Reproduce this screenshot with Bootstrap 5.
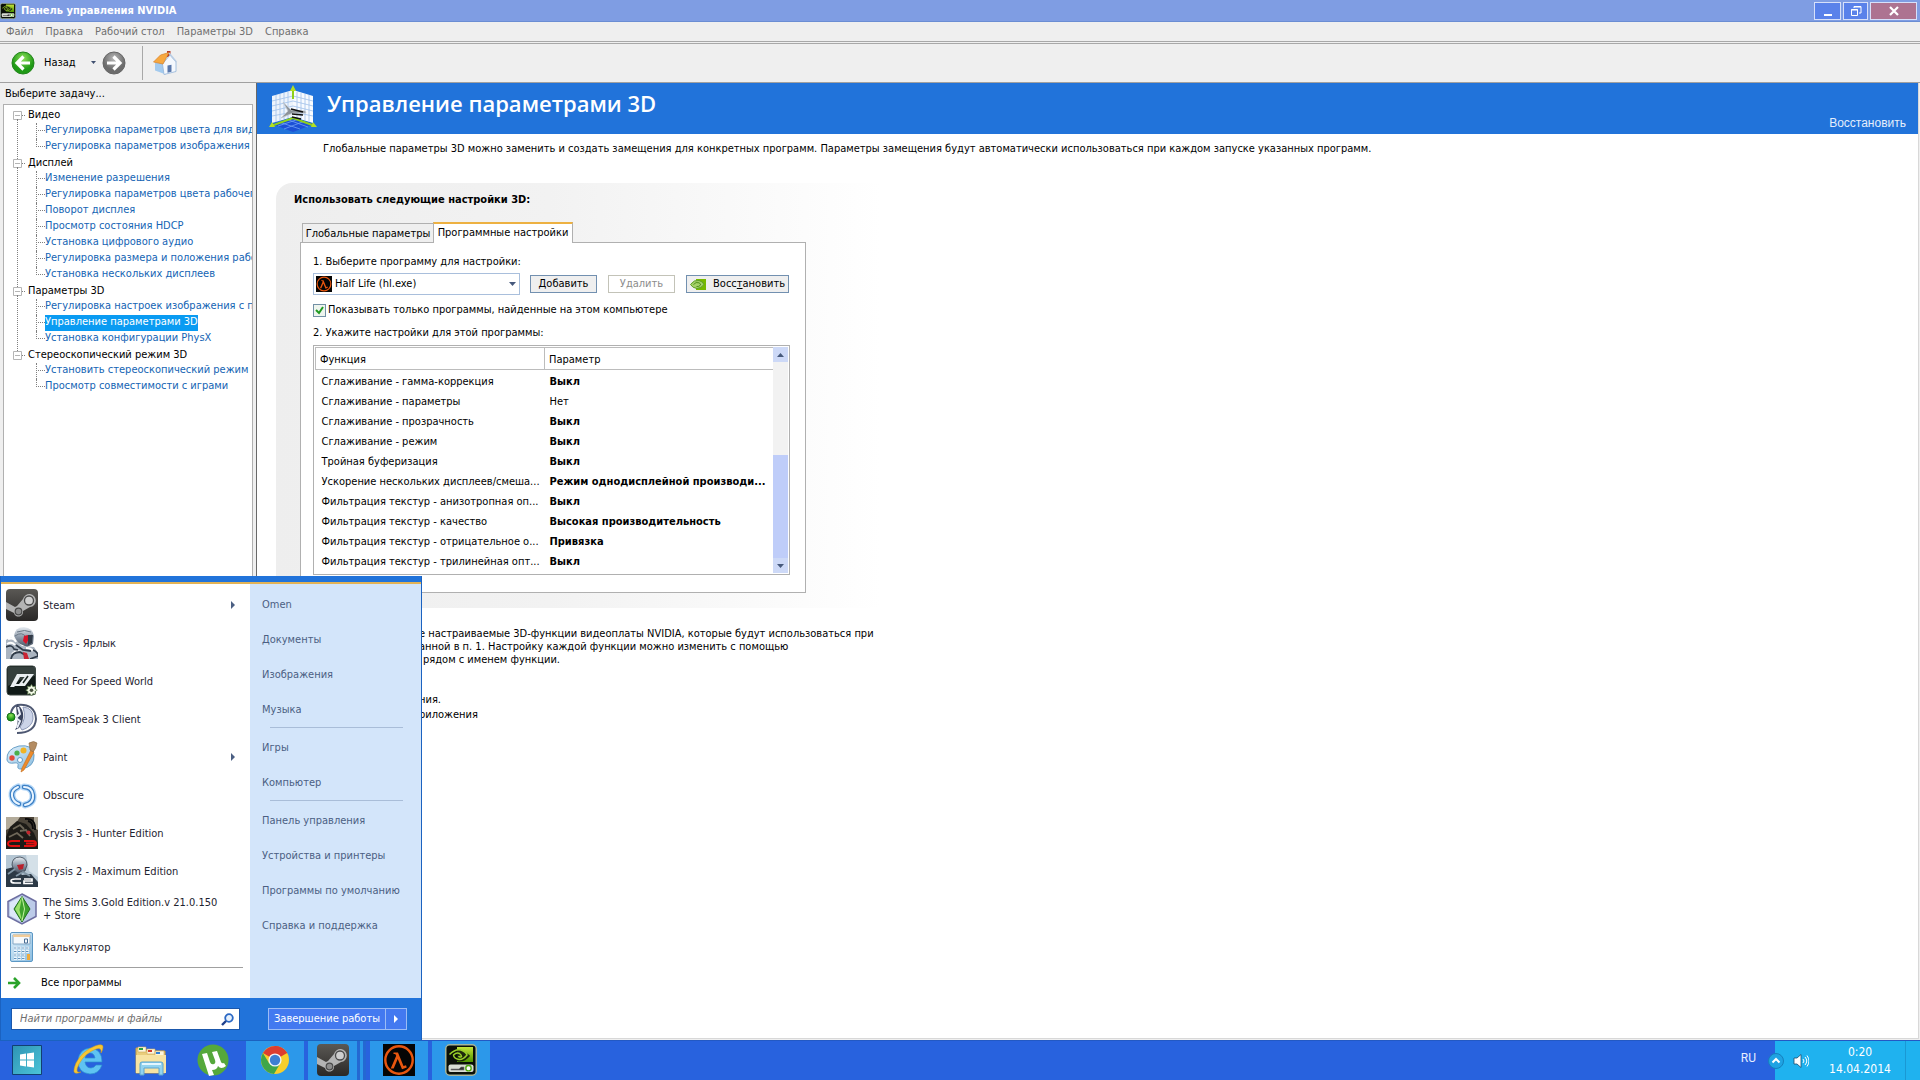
<!DOCTYPE html>
<html lang="ru">
<head>
<meta charset="utf-8">
<meta name="viewport" content="width=device-width, initial-scale=1">
<title>Панель управления NVIDIA</title>
<link href="https://cdn.jsdelivr.net/npm/bootstrap@5.3.0/dist/css/bootstrap.min.css" rel="stylesheet">
<style>
:root{--ui:"DejaVu Sans Condensed","DejaVu Sans","Noto Sans",sans-serif;--edge:#b0b0b0;--blue:#2173da;--ink:#000}
body{font-family:var(--ui);font-size:11px;line-height:16px;color:var(--ink);background:#efefef}
a{text-decoration:none}
button,select,input{font-family:inherit;font-size:inherit;line-height:inherit}
svg{display:block;flex:none}
/* window frame */
.titlebar{height:22px;background:#7f9de3;border-bottom:1px solid #6b8dd3;color:#fff}
.caption-text{font-size:11px;font-weight:700;margin-left:5px}
.winbtns{gap:2px;padding-right:3px}
.winbtn{height:18px;border:1px solid #d7e0fa;background:#5a82ea;padding:0;width:27px;border-radius:0}
.winbtn.mid{width:25px}
.winbtn.shut{width:47px;background:#ad7391}
.menubar{height:20px;border-bottom:1px solid #a8a8a8;gap:12px;padding:1px 0 0 6px}
.menubar a{color:#707070}
.toolbar-row{height:40px;margin-top:1px;border-top:1px solid #a8a8a8;border-bottom:1px solid #a0a0a0;padding-left:11px}
.toolbar-row button{color:#000;font-size:11px}
.back-label{margin-left:9px}
.history{margin:0 5px 0 14px}
.vrule{width:1px;height:34px;background:#a8a8a8;margin:0 10px 0 16px}
/* task tree */
.side{width:257px;border-right:1px solid #686868}
.side-title{padding:3px 0 2px 5px}
.tree{background:#fff;border:1px solid var(--edge);margin:0 3px;padding:2px 0 0 9px}
.tree ul{list-style:none;margin:0;padding:0}
.tree li{white-space:nowrap}
.grp{height:16px}
.grp svg{margin-right:2px}
.trunk>li{position:relative}
.trunk>li:not(:last-child)::before{content:"";position:absolute;left:4px;top:12px;bottom:-4px;border-left:1px dotted #808080}
.tree .kids{padding-left:23px}
.kids li{height:16px;position:relative;padding-left:9px}
.kids li::before{content:"";position:absolute;left:0;top:0;height:16px;border-left:1px dotted #808080}
.kids li:last-child::before{height:8px}
.kids li::after{content:"";position:absolute;left:0;top:7px;width:9px;border-top:1px dotted #808080}
.kids a{color:#1464b4;display:block;width:max-content;height:16px;line-height:14px}
.kids a.picked{background:#0a9bf2;color:#fff}
/* page */
.pane{border-right:1px solid #d8d8d8;border-bottom:1px solid #d8d8d8;margin-right:1px;margin-bottom:1px}
.banner{height:51px;background:var(--blue);color:#fff;padding:0 12px}
.banner h1{font-family:"Open Sans","Noto Sans",sans-serif;font-size:22px;line-height:28px;font-weight:600;margin:6px 0 0 10px}
.banner a{font-family:"Liberation Sans",sans-serif;font-size:12px;color:#e4eefc;padding-bottom:3px}
.intro{padding:7px 0 0 66px}
.sheet{width:606px;margin:26px 0 0 19px;padding:9px 0 15px 18px;border-radius:16px 0 0 0;background:linear-gradient(90deg,#eee,#f2f2f2 45%,#fff)}
.sheet-title{font-weight:700}
.tabline{margin-top:14px;padding-left:8px}
.tabline button{border:1px solid var(--edge);border-bottom:0;background:#efefef;padding:0;color:#000}
.tabline .rest{width:132px;height:19px;padding-top:2px}
.tabline .live{width:140px;height:21px;background:#fff;border-top:2px solid #edb142;margin-left:-1px;margin-bottom:-1px;padding-bottom:2px;position:relative}
.tabpage{width:506px;margin-left:6px;border:1px solid var(--edge);background:#fff;padding:11px 15px 15px 12px;min-height:351px}
.combo{width:207px;height:22px;border:1px solid #a9bfdc;padding:0 3px 0 2px}
.combo select{border:0;background:none;appearance:none;padding:0 0 0 3px;color:#000;outline:0}
.picker{margin-top:3px}
.picker .combo{margin-right:10px}
.acts{gap:11px}
.pushbtn{height:18px;border:1px solid #7290b0;background:#efefef;border-radius:0;padding:0;color:#000;width:67px;line-height:14px}
.pushbtn:disabled{background:#fff;border-color:#c3c3b8;color:#8c8c8c}
.pushbtn.wide{width:103px;padding:0 3px}
.filter{margin-top:7px;gap:2px}
.tick{appearance:none;width:13px;height:13px;margin:0;border:1px solid #7290a5;background:#eef5ee url("data:image/svg+xml,%3Csvg xmlns='http://www.w3.org/2000/svg' viewBox='0 0 11 11'%3E%3Cpath d='M2 5l3 3 4-6' fill='none' stroke='%23219a21' stroke-width='2'/%3E%3C/svg%3E")}
.step2{margin-top:7px}
.gridbox{border:1px solid var(--edge);padding:1px;width:477px;margin-top:4px}
.gridbox table{table-layout:fixed;color:#000;--bs-table-bg:transparent}
.gridbox .fn{width:229px}
.gridbox th,.gridbox td{padding:0 0 0 6px;height:20px;white-space:nowrap;overflow:hidden;line-height:18px;border:0;color:#000}
.gridbox thead th{height:22px;font-weight:400;border:1px solid #bcbcbc;border-right:0;padding-left:4px}
.gridbox tbody::before{content:"";display:block;height:3px}
.gridbox td.set{font-weight:700}
.gridbox td+td{padding-left:5px}
.scroller{width:15px;background:#f2f2f2}
.scroller button{height:15px;width:15px;background:#cdd9f7;border:0;padding:0}
.scroller .thumb{height:103px;background:#bfcdf9}
.notes{padding:19px 0 0 162px;line-height:13px}
.notes p{margin:0}
.notes .gap{margin-top:27px}
.notes .gap2{margin-top:2px}
/* start menu */
.startmenu{position:absolute;left:0;bottom:100%;width:422px;border:1px solid #1b62c0;border-top:0;background:var(--blue)}
.cap-strip{height:8px;border-bottom:2px solid #e3b355}
.progs{width:249px;background:#fff;padding:2px 0 0}
.prog{height:38px;padding:0 15px 0 5px;color:#1e2330;line-height:13px}
.prog span{margin-left:5px;width:180px}
.progs hr{margin:1px 7px 0 10px;border-top:1px solid #a0a0a0;opacity:1}
.allprogs{height:30px;padding-left:7px;color:#000}
.allprogs span{margin-left:20px}
.places{background:#d3e5fa;padding:3px 0 55px}
.places a{display:block;height:35px;line-height:35px;padding-left:12px;color:#4b5f83}
.places hr{margin:0 18px 2px 20px;border-top:1px solid #a9bdd8;opacity:1}
.startfoot{height:42px;padding:0 14px 0 10px}
.searchbox{width:229px;height:22px;background:#fff;border:1px solid #1a57ac;padding-right:5px}
.searchbox input{border:0;background:none;font-style:italic;padding:0 0 0 8px;outline:0;min-width:0}
.searchbox input::placeholder{color:#6e6e6e;opacity:1}
.powerbtn{height:22px;border:1px solid #9cbcf5;background:#4379f0;color:#fff;padding:0;width:118px}
.powerbtn.more{width:21px;border-left:0}
/* taskbar */
.deskbar{height:40px;background:#2862de;border-top:1px solid #2359c4;gap:4px;position:relative}
.slot{width:58px;height:39px;border:0;padding:0 0 1px;background:none}
.slot.first{width:56px;padding-right:2px}
.slot.run{background:#2c98ea}
.slot.pile{border-right:9px double #2468d2}
.tray{background:#1fb2ef;width:145px;color:#fff}
.lang{font-family:Roboto,sans-serif;font-size:12px;color:#e8f0ff;margin-right:19px;padding-bottom:6px}
.clock{font-size:12px;line-height:17px;width:90px}
.peek{width:15px;border-left:1px solid #1a98d4}
.trayup{margin:0 9px 0 -7px;background:none;border:0;padding:0}
</style>
<script src="https://cdn.jsdelivr.net/npm/bootstrap@5.3.0/dist/js/bootstrap.bundle.min.js"></script>
</head>
<body class="vh-100 d-flex flex-column overflow-hidden">
<svg width="0" height="0" class="position-absolute" aria-hidden="true">
<defs>
<linearGradient id="gDark" x2="0" y2="1"><stop stop-color="#5a5854"/><stop offset="1" stop-color="#2a2827"/></linearGradient>
<linearGradient id="gSteel" x2="0" y2="1"><stop stop-color="#e8edf2"/><stop offset=".5" stop-color="#8f9baa"/><stop offset="1" stop-color="#4a5564"/></linearGradient>
<radialGradient id="gGreen" cy=".3"><stop stop-color="#8ee05a"/><stop offset="1" stop-color="#1f9a16"/></radialGradient>
<radialGradient id="gGrey" cy=".3"><stop stop-color="#b8b8b8"/><stop offset="1" stop-color="#6c6c6c"/></radialGradient>
<linearGradient id="gSky" x2="1" y2="1"><stop stop-color="#dff0fb"/><stop offset="1" stop-color="#8bbde0"/></linearGradient>
<linearGradient id="gNv" x2="0" y2="1"><stop stop-color="#c3e33a"/><stop offset="1" stop-color="#4f9400"/></linearGradient>
<linearGradient id="gTeal" x2="1" y2="1"><stop stop-color="#2e93b4"/><stop offset="1" stop-color="#4cc4d8"/></linearGradient>
<symbol id="steam" viewBox="0 0 32 32"><rect width="32" height="32" rx="4" fill="url(#gDark)"/><path d="M0 13l9 5 2-1 6-7A6.500 6.500 0 1 1 24 18l-7 4A4.600 4.600 0 0 1 8 24L0 20z" fill="#b4b4b4"/><circle cx="23" cy="11.500" r="4.500" fill="#cfcfcf" stroke="#4a4a4a" stroke-width="1.300"/><circle cx="12.500" cy="22.500" r="3.300" fill="#8d8d8d" stroke="#4a4a4a" stroke-width="1.200"/></symbol>
<symbol id="lambda" viewBox="0 0 32 32"><rect width="32" height="32" fill="#050505"/><circle cx="16" cy="16" r="13.700" fill="none" stroke="#e8560f" stroke-width="2.400"/><path d="M10.500 8.500h4.500l5.500 13.500 2.500-.8.8 2.300-4.800 1.800-4.300-10.300-4 9.500h-3l5.500-12.800-1-1.700h-1.700z" fill="#e8560f"/></symbol>
<symbol id="nvbox" viewBox="0 0 32 32"><rect x=".75" y=".75" width="30.500" height="30.500" rx="4" fill="#0a0f08" stroke="#a5b59a" stroke-width="1.500"/><path d="M12 3h16v15H12z" fill="url(#gNv)"/><path d="M4 10q7-7 14-3t7 5q-5 6-11 5.500T4 10z" fill="#0a0f08" opacity=".85"/><path d="M4.500 10.500q6-6 11.500-4.500 5 2 6 5-4 5-8 4.500-5-.8-5.500-4.500 3-3 6-1.500 2 1.500 2 3-2 1-3-.5" fill="none" stroke="#9ad02a" stroke-width="1.500"/><rect x="3.500" y="20.500" width="25" height="7.500" rx="2" fill="#d9ddd4"/><circle cx="23.500" cy="24.200" r="2.700" fill="#fff" stroke="#4faa10" stroke-width="1.400"/><path d="M6 25h8l2-2h3v3h-13z" fill="#333" stroke="#777" stroke-width=".6"/></symbol>
<symbol id="minus" viewBox="0 0 13 9"><path d="M.5.500h8v8h-8zM2 4.500h5" fill="#fff" stroke="#b5b5b5"/><path d="M9 4.500h4" stroke="#808080" stroke-dasharray="1 1"/></symbol>
</defs>
</svg>

<main class="flex-grow-1 d-flex flex-column overflow-hidden">
  <header class="titlebar d-flex align-items-center flex-shrink-0">
    <svg width="16" height="16" viewBox="0 0 32 32"><use href="#nvbox"/></svg>
    <span class="caption-text flex-grow-1">Панель управления NVIDIA</span>
    <div class="winbtns d-flex">
      <button class="winbtn" aria-label="Свернуть"><svg class="mx-auto" width="12" height="12"><path d="M2 9h8v2H2z" fill="#fff"/></svg></button>
      <button class="winbtn mid" aria-label="Восстановить окно"><svg class="mx-auto" width="12" height="12" fill="none" stroke="#fff"><path d="M4 3V1.500h7V8H9M4 2h7"/><path d="M1.500 4.500h6v6h-6zM1 5h7" /></svg></button>
      <button class="winbtn shut" aria-label="Закрыть"><svg class="mx-auto" width="12" height="12"><path d="M2 2l8 8M10 2l-8 8" stroke="#fff" stroke-width="2.200"/></svg></button>
    </div>
  </header>
  <nav class="menubar d-flex align-items-center flex-shrink-0">
    <a href="#">Файл</a><a href="#">Правка</a><a href="#">Рабочий стол</a><a href="#">Параметры 3D</a><a href="#">Справка</a>
  </nav>
  <div class="toolbar-row d-flex align-items-center flex-shrink-0">
    <button class="btn p-0 border-0 rounded-0 d-flex align-items-center">
      <svg width="24" height="24"><circle cx="12" cy="12" r="11" fill="url(#gGreen)" stroke="#23851c"/><path d="M12.500 5.500L6 12l6.500 6.500M6.500 12H19" fill="none" stroke="#fff" stroke-width="3.200"/></svg>
      <span class="back-label">Назад</span>
    </button>
    <button class="btn p-0 border-0 history" aria-label="Журнал"><svg width="7" height="4"><path d="M1 0h5L3.500 3z" fill="#3f4f6f"/></svg></button>
    <button class="btn p-0 border-0" aria-label="Вперёд"><svg width="24" height="24"><circle cx="12" cy="12" r="11" fill="url(#gGrey)" stroke="#666"/><path d="M11.500 5.500L18 12l-6.500 6.500M17.500 12H5" fill="none" stroke="#fff" stroke-width="3.200"/></svg></button>
    <div class="vrule"></div>
    <button class="btn p-0 border-0" aria-label="Домой"><svg width="24" height="24"><path d="M14 0h3.500v6H14z" fill="#b83a25"/><path d="M2 11.500l8-1 3 3v10l-11-4z" fill="#a3caee"/><path d="M9.500 13l7.500-9 6 7v9.500L11 23.500z" fill="#f4f8fd" stroke="#93b4d8" stroke-width=".8"/><path d="M.5 11L7.500 4 16 1.500 10 13z" fill="#f7a840" stroke="#d7832a" stroke-width=".7"/><path d="M16 2l7.500 9" stroke="#b9cde4" stroke-width="1.500"/><path d="M14.500 14.500l4-.8v7l-4 1z" fill="#5877ab"/></svg></button>
  </div>

  <div class="d-flex flex-grow-1 overflow-hidden">
    <aside class="side d-flex flex-column flex-shrink-0">
      <div class="side-title">Выберите задачу...</div>
      <div class="tree flex-grow-1 overflow-hidden">
        <ul class="trunk">
          <li><div class="grp d-flex align-items-center"><svg width="13" height="9"><use href="#minus"/></svg>Видео</div>
            <ul class="kids"><li><a href="#">Регулировка параметров цвета для вид</a></li><li><a href="#">Регулировка параметров изображения д</a></li></ul></li>
          <li><div class="grp d-flex align-items-center"><svg width="13" height="9"><use href="#minus"/></svg>Дисплей</div>
            <ul class="kids"><li><a href="#">Изменение разрешения</a></li><li><a href="#">Регулировка параметров цвета рабочег</a></li><li><a href="#">Поворот дисплея</a></li><li><a href="#">Просмотр состояния HDCP</a></li><li><a href="#">Установка цифрового аудио</a></li><li><a href="#">Регулировка размера и положения рабо</a></li><li><a href="#">Установка нескольких дисплеев</a></li></ul></li>
          <li><div class="grp d-flex align-items-center"><svg width="13" height="9"><use href="#minus"/></svg>Параметры 3D</div>
            <ul class="kids"><li><a href="#">Регулировка настроек изображения с пр</a></li><li><a href="#" class="picked">Управление параметрами 3D</a></li><li><a href="#">Установка конфигурации PhysX</a></li></ul></li>
          <li><div class="grp d-flex align-items-center"><svg width="13" height="9"><use href="#minus"/></svg>Стереоскопический режим 3D</div>
            <ul class="kids"><li><a href="#">Установить стереоскопический режим 3</a></li><li><a href="#">Просмотр совместимости с играми</a></li></ul></li>
        </ul>
      </div>
    </aside>

    <section class="pane flex-grow-1 bg-white overflow-hidden">
      <div class="banner d-flex">
        <svg class="align-self-center" width="48" height="48" viewBox="0 0 48 48"><path d="M3 11l21-6v27L3 38z" fill="#eef4fc"/><path d="M24 5l20 6v27L24 32z" fill="#f8fbff"/><path d="M7 10v27M11 9v27M15 8v26M19 7v26M28 7v26M32 8v26M36 9v27M40 10v27M3 16l21-5 20 5M3 21l21-5 20 5M3 26l21-5 20 5M3 31l21-4 20 4" fill="none" stroke="#9fc0ea" stroke-width=".8"/><path d="M3 39l21-7 21 7-21 8z" fill="#1c50d6"/><path d="M9 41l21-7M15 44l21-8M17 34l22 8M10 37l21 7" stroke="#6ea0f5" stroke-width=".8"/><path d="M24 14V3M24 33L2 41M24 33l22 8" fill="none" stroke="#8fd01c" stroke-width="2"/><path d="M24 0l3 6h-6zM0 42l3-5 3 5zM48 42l-4-5-2 5z" fill="#b4e024"/><path d="M14 17l8 8 14 1 1 2-13 0-12 5 7-7z" fill="#8c9299" stroke="#c3c8ce" stroke-width=".8"/><path d="M22 24l12 3M23 29l11 1M23 32l9 2" stroke="#111" stroke-width="1.500"/></svg>
        <h1 class="flex-grow-1">Управление параметрами 3D</h1>
        <a href="#" class="align-self-end">Восстановить</a>
      </div>
      <p class="intro mb-0">Глобальные параметры 3D можно заменить и создать замещения для конкретных программ. Параметры замещения будут автоматически использоваться при каждом запуске указанных программ.</p>

      <div class="sheet">
        <div class="sheet-title">Использовать следующие настройки 3D:</div>
        <div class="tabline d-flex align-items-end">
          <button class="rest">Глобальные параметры</button><button class="live">Программные настройки</button>
        </div>
        <div class="tabpage">
          <label for="prog" class="d-block">1. Выберите программу для настройки:</label>
          <div class="picker d-flex align-items-center">
            <div class="combo d-flex align-items-center">
              <svg width="16" height="16"><use href="#lambda"/></svg>
              <select id="prog" class="flex-grow-1"><option>Half Life (hl.exe)</option></select>
              <svg width="7" height="4"><path d="M0 0h7L3.500 4z" fill="#46597c"/></svg>
            </div>
            <div class="acts d-flex">
              <button class="pushbtn">Добавить</button>
              <button class="pushbtn" disabled>Удалить</button>
              <button class="pushbtn wide d-flex align-items-center justify-content-between"><svg width="16" height="11"><path d="M6 0h10v11H6z" fill="#76b900"/><path d="M.5 5.500Q4 .5 9 1.500q4 1 5 4-3 4-7 4Q2.500 9 .5 5.500z" fill="#a5d169" stroke="#5c9e28"/><path d="M3.500 5.500Q6 2.500 9 3.800q2 1 1.500 2.200-1.500 2-4 1.500" fill="none" stroke="#4f8f1c"/></svg><span>Восс<u>т</u>ановить</span></button>
            </div>
          </div>
          <div class="filter d-flex align-items-center">
            <input class="tick" type="checkbox" id="found" checked><label for="found">Показывать только программы, найденные на этом компьютере</label>
          </div>
          <div class="step2">2. Укажите настройки для этой программы:</div>
          <div class="gridbox d-flex">
            <table class="table mb-0 flex-grow-1">
              <colgroup><col class="fn"><col></colgroup>
              <thead><tr><th scope="col">Функция</th><th scope="col">Параметр</th></tr></thead>
              <tbody>
                <tr><td>Сглаживание - гамма-коррекция</td><td class="set">Выкл</td></tr>
                <tr><td>Сглаживание - параметры</td><td>Нет</td></tr>
                <tr><td>Сглаживание - прозрачность</td><td class="set">Выкл</td></tr>
                <tr><td>Сглаживание - режим</td><td class="set">Выкл</td></tr>
                <tr><td>Тройная буферизация</td><td class="set">Выкл</td></tr>
                <tr><td>Ускорение нескольких дисплеев/смеша...</td><td class="set">Режим однодисплейной производи...</td></tr>
                <tr><td>Фильтрация текстур - анизотропная оп...</td><td class="set">Выкл</td></tr>
                <tr><td>Фильтрация текстур - качество</td><td class="set">Высокая производительность</td></tr>
                <tr><td>Фильтрация текстур - отрицательное о...</td><td class="set">Привязка</td></tr>
                <tr><td>Фильтрация текстур - трилинейная опт...</td><td class="set">Выкл</td></tr>
              </tbody>
            </table>
            <div class="scroller d-flex flex-column">
              <button aria-label="Вверх"><svg class="mx-auto" width="7" height="4"><path d="M0 4h7L3.500 0z" fill="#46597c"/></svg></button>
              <div class="thumb mt-auto"></div>
              <button aria-label="Вниз"><svg class="mx-auto" width="7" height="4"><path d="M0 0h7L3.500 4z" fill="#46597c"/></svg></button>
            </div>
          </div>
        </div>
      </div>
      <div class="notes">
        <p>е настраиваемые 3D-функции видеоплаты NVIDIA, которые будут использоваться при</p>
        <p>анной в п. 1. Настройку каждой функции можно изменить с помощью</p>
        <p class="ps-1">рядом с именем функции.</p>
        <p class="gap">ния.</p>
        <p class="gap2">риложения</p>
      </div>
    </section>
  </div>
</main>

<footer class="deskbar d-flex flex-shrink-0">
  <div class="startmenu">
    <div class="cap-strip"></div>
    <div class="d-flex">
      <div class="progs">
        <a class="prog d-flex align-items-center" href="#"><svg width="32" height="32"><use href="#steam"/></svg><span>Steam</span><svg class="ms-auto" width="4" height="8"><path d="M0 0v8l4-4z" fill="#4b5f83"/></svg></a>
        <a class="prog d-flex align-items-center" href="#"><svg width="32" height="32"><path d="M8 9Q9 0 18 0q9 1 10 9l-1 8-6 3-9-4z" fill="url(#gSteel)"/><path d="M9 9q7-5 11 1l6-2M11 5q8-3 14 0" fill="none" stroke="#6b7886"/><path d="M18 9l4-1 1 4-3 5-3-3z" fill="#d8142a"/><path d="M22 8l5 0-1 8-4 2z" fill="#323b47"/><path d="M0 13q6-5 11 1l5 5 12 1 4 6v6H0z" fill="#aab4c0"/><path d="M2 12q6-2 8 3M1 17q5-3 8 1M6 27q4-4 9-2M20 21q5 0 7 3" fill="none" stroke="#fff" stroke-width="2"/><path d="M0 20q6-3 8 2l4 1M5 32q1-7 9-7l5 3M10 18l7 5 8 1M27 23q5 2 5 6l-8 3" fill="none" stroke="#313c4a" stroke-width="1.800"/><path d="M17 25l4 1 2 6h-5z" fill="#c92333"/></svg><span>Crysis - Ярлык</span></a>
        <a class="prog d-flex align-items-center" href="#"><svg width="32" height="32"><rect x="1" y="1" width="28.500" height="29" rx="3" fill="#101a17" stroke="#3c4743"/><path d="M2 2h27v9q-14 2-27 10z" fill="#4f5a57" opacity=".6"/><path d="M4 22l7-13h10l-2 3h-5l-4 7h3l8-10h7l-9 12H9l-1 1z" fill="#e9eef0"/><path d="M17 18l5-7" stroke="#17231f" stroke-width="1.500"/><path d="M25.500 19.500l1.400 2.300 2.600-.6-.6 2.600 2.300 1.400-2.300 1.400.6 2.600-2.600-.6-1.400 2.300-1.400-2.300-2.600.6.600-2.600-2.300-1.400 2.300-1.400-.6-2.600 2.600.6z" fill="#f4fbe8" stroke="#5b7c4a" stroke-width=".7"/><circle cx="25.500" cy="25.200" r="1.800" fill="#47513f"/></svg><span>Need For Speed World</span></a>
        <a class="prog d-flex align-items-center" href="#"><svg width="32" height="32"><path d="M11 2q18-2 19 14-1 14-19 14" fill="none" stroke="#4e5872" stroke-width="2"/><path d="M17 4q11 1 10 12-1 8-11 11l-2-3q7-8 3-20z" fill="#ccd4e8" stroke="#8d99b8"/><path d="M10 2q5 0 7 8 1 8-4 15l-4 2q4-7 2-13z" fill="#39435e"/><path d="M12 4l2 7-4 4 4 3-3 7" fill="none" stroke="#e9edf7" stroke-width="2"/><path d="M5 10q1-6 6-8" fill="none" stroke="#4e5872" stroke-width="2"/><circle cx="5" cy="14" r="4" fill="url(#gGreen)" stroke="#15701a"/></svg><span>TeamSpeak 3 Client</span></a>
        <a class="prog d-flex align-items-center" href="#"><svg width="32" height="32"><path d="M1 19Q0 8 13 5q14-2 15 9 1 12-13 14-4 0-3-3 1-4-4-3-6 1-7-3z" fill="url(#gSky)" stroke="#6aa0c8"/><circle cx="6" cy="17" r="2.700" fill="#e24a3b"/><circle cx="11" cy="12" r="2.600" fill="#4bb04a"/><circle cx="17.500" cy="9.500" r="3" fill="#f0b323"/><circle cx="14" cy="19" r="2.500" fill="#fff" stroke="#5e97c2"/><path d="M25 9l3 2-10 18-3 2 1-4z" fill="#ed8b2b" stroke="#c26b1a" stroke-width=".6"/><path d="M23 2q5-3 8 0-1 6-4 9l-3-2z" fill="#b48c62" stroke="#8a683f" stroke-width=".6"/></svg><span>Paint</span><svg class="ms-auto" width="4" height="8"><path d="M0 0v8l4-4z" fill="#4b5f83"/></svg></a>
        <a class="prog d-flex align-items-center" href="#"><svg width="32" height="32" fill="none" stroke-linecap="round"><path d="M12 8Q5 11 6 17t7 8M18 8q8 0 9 8t-8 10" stroke="#b5d8f8" stroke-width="7"/><path d="M12 8Q5 11 6 17t7 8M18 8q8 0 9 8t-8 10" stroke="#3c7fc4" stroke-width="4.500"/><path d="M12 8Q5 11 6 17t7 8M18 8q8 0 9 8t-8 10" stroke="#e9f5ff" stroke-width="2"/></svg><span>Obscure</span></a>
        <a class="prog d-flex align-items-center" href="#"><svg width="32" height="32"><path d="M0 0h32v32H0z" fill="#4b4439"/><path d="M0 0h14L8 9 0 13zM28 0h4v13l-4-2z" fill="#b3ab9a"/><path d="M4 10l7-6 9 3 8 9 4 10v6H0V20z" fill="#1d1b17"/><path d="M7 12l7-4 4 4M3 20l8-4 6 5M14 14l6-1 4 6" fill="none" stroke="#6f6859" stroke-width="1.800"/><path d="M19 2q11-1 10 11M22 4q5 1 5 8" fill="none" stroke="#090909" stroke-width="1.800"/><circle cx="22.500" cy="15.500" r="2" fill="#c1272d"/><path d="M14 24H6q-4 0-4 2.500T6 29h8M18 24h9q3 0 3 2.500T27 29h-9M20 26.500h9" fill="none" stroke="#e01010" stroke-width="2"/></svg><span>Crysis 3 - Hunter Edition</span></a>
        <a class="prog d-flex align-items-center" href="#"><svg width="32" height="32"><path d="M0 0h32v32H0z" fill="#b5c6d3"/><path d="M20 0h12v22l-9-6z" fill="#d4e0e8"/><path d="M0 14l8-2 8 8 9-1 7 8v5H0z" fill="#2c3945"/><path d="M6 10Q6 2 14 2q7 1 7 8l-2 6-7 2-4-3z" fill="url(#gSteel)" stroke="#384350" stroke-width=".8"/><path d="M11 10l7-1-1 5-4 1z" fill="#b9202c"/><path d="M2 19l7-5M10 21l7-4 7 4" fill="none" stroke="#8296a5" stroke-width="1.800"/><path d="M15 24H9q-4 0-4 2t4 2h6M18 24h8v2h-8v2.500h9" fill="none" stroke="#fff" stroke-width="1.700"/></svg><span>Crysis 2 - Maximum Edition</span></a>
        <a class="prog d-flex align-items-center" href="#"><svg width="32" height="32"><path d="M16 1l14 7.500v15L16 31 2 23.500v-15z" fill="#bccbe8" stroke="#6c6da0" stroke-width="1.500"/><path d="M16 3v26L4 22.500v-13z" fill="#dde8f8"/><path d="M16 3.500L24 16l-8 13-8-13z" fill="#3da22c" stroke="#216e1c"/><path d="M16 4l-2.500 13 2.500 11-7-12z" fill="#9be06b"/><path d="M16 4l2.500 12L16 28" fill="none" stroke="#c6f2a4"/></svg><span>The Sims 3.Gold Edition.v 21.0.150 + Store</span></a>
        <a class="prog d-flex align-items-center" href="#"><svg width="32" height="32"><rect x="4.500" y="1.500" width="22" height="29" rx="1.500" fill="url(#gSky)" stroke="#5b97c4"/><path d="M7 4h17v9H7z" fill="#f5f9fc" stroke="#86a9c6"/><path d="M7 3.500h17v2.500H7z" fill="#f0cc9a"/><path d="M18.500 8h3v4h-3z" fill="none" stroke="#486d94"/><path d="M8 17h16M8 20.500h16M8 24h12M8 27.500h12" stroke="#fff" stroke-width="2.600" stroke-dasharray="3 1"/><path d="M8 17h16M8 20.500h16M8 24h12M8 27.500h12" stroke="#6594be" stroke-width="1.200" stroke-dasharray="2.500 1.500"/><path d="M21 23h3v6h-3z" fill="#efab3d"/></svg><span>Калькулятор</span></a>
        <hr>
        <a class="allprogs d-flex align-items-center" href="#"><svg width="13" height="12"><path d="M0 6h10M6 1l5 5-5 5" fill="none" stroke="#2ba32b" stroke-width="2.600"/></svg><span>Все программы</span></a>
      </div>
      <nav class="places flex-grow-1">
        <a href="#">Omen</a><a href="#">Документы</a><a href="#">Изображения</a><a href="#">Музыка</a>
        <hr>
        <a href="#">Игры</a><a href="#">Компьютер</a>
        <hr>
        <a href="#">Панель управления</a><a href="#">Устройства и принтеры</a><a href="#">Программы по умолчанию</a><a href="#">Справка и поддержка</a>
      </nav>
    </div>
    <div class="startfoot d-flex align-items-center">
      <div class="searchbox d-flex align-items-center">
        <input class="flex-grow-1" type="text" placeholder="Найти программы и файлы" aria-label="Найти программы и файлы">
        <svg width="13" height="13"><circle cx="8" cy="5" r="3.800" fill="#e6f1fd" stroke="#2b68c4" stroke-width="1.800"/><path d="M5 8l-4 4" stroke="#1d3f8c" stroke-width="2.400"/></svg>
      </div>
      <div class="d-flex ms-auto">
        <button class="powerbtn">Завершение работы</button><button class="powerbtn more" aria-label="Ещё"><svg class="mx-auto" width="4" height="8"><path d="M0 0v8l4-4z" fill="#fff"/></svg></button>
      </div>
    </div>
  </div>

  <button class="slot first d-flex align-items-center justify-content-center" aria-label="Пуск"><svg width="30" height="30"><path d="M.5.500h29v29H.5z" fill="url(#gTeal)" stroke="#123f72"/><path d="M8 9.500l6-.9v6H8zM15 8.500l7-1v7.100h-7zM8 15.500h6v6l-6-.9zM15 15.500h7v7l-7-1z" fill="#fff"/></svg></button>
  <button class="slot d-flex align-items-center justify-content-center" aria-label="Internet Explorer"><svg width="32" height="32"><path d="M29 18H12q1 6 6 6 3 0 5-3h6q-3 9-12 9Q5 29 5 17 6 5 17 4q12 1 12 14zM12 14h10q-1-5-5-5t-5 5z" fill="#5fc3f2" stroke="#2a8fd0" stroke-width=".7"/><path d="M5 29Q-2 31 3 19 9 7 22 2q8-3 8 1 0 3-2 6 1-6-5-4Q12 9 6 20q-5 10 2 8z" fill="#f6c634" stroke="#d49c1a" stroke-width=".5"/></svg></button>
  <button class="slot d-flex align-items-center justify-content-center" aria-label="Проводник"><svg width="32" height="32"><path d="M1 4h9l2 3h18v22H1z" fill="#e9cd7c" stroke="#c49c43"/><path d="M3 3h8v5H3zM12 5h8v5h-8zM20 7h9v5h-9z" fill="#fdf6dc" stroke="#cda957" stroke-width=".6"/><path d="M4 4h4v2H4z" fill="#25a244"/><path d="M13 6h4v2h-4z" fill="#d23a2a"/><path d="M21 8h4v2h-4z" fill="#2f7fd6"/><path d="M1 11h30v18H1z" fill="#f7e3a2"/><path d="M5 31V20q0-2 2-2h19q2 0 2 2v11h-4v-7H9v7z" fill="#92d3ef" stroke="#5aa4d0"/><path d="M7 20h19" stroke="#e4f7ff" stroke-width="2"/></svg></button>
  <button class="slot d-flex align-items-center justify-content-center" aria-label="µTorrent"><svg width="32" height="32"><circle cx="16" cy="16" r="15.500" fill="#55a83b"/><path d="M5 10l5-1 3 9q1 3 4 2 2-1 1-4l-3-8 5-1 4 11q1 2 3 1l2 3q-5 4-8 0-1 4-6 4l2 5-5 1z" fill="#fff"/></svg></button>
  <button class="slot run d-flex align-items-center justify-content-center" aria-label="Chrome"><svg width="30" height="30" viewBox="0 0 30 30"><circle cx="15" cy="15" r="14" fill="#f7cf2b"/><path d="M15 15L2.900 8A14 14 0 0 1 27.100 8z" fill="#dc3e30"/><path d="M15 8h12.200q-5-7-12.200-7z" fill="#dc3e30"/><path d="M2.900 8A14 14 0 0 0 14 29l6.500-11L15 15 9 18z" fill="#3fa64a"/><circle cx="15" cy="15" r="6.600" fill="#f1f5f8"/><circle cx="15" cy="15" r="5.200" fill="#3d7fd2"/></svg></button>
  <button class="slot run pile d-flex align-items-center justify-content-center" aria-label="Steam"><svg width="32" height="32"><use href="#steam"/></svg></button>
  <button class="slot run d-flex align-items-center justify-content-center" aria-label="Half-Life"><svg width="32" height="32"><use href="#lambda"/></svg></button>
  <button class="slot run d-flex align-items-center justify-content-center" aria-label="NVIDIA"><svg width="32" height="32"><use href="#nvbox"/></svg></button>

  <div class="ms-auto d-flex align-items-stretch">
    <span class="lang align-self-center">RU</span>
    <div class="tray d-flex align-items-center">
      <button class="trayup" aria-label="Скрытые значки"><svg width="16" height="16"><circle cx="8" cy="8" r="7.500" fill="#1fa3e3" stroke="#1680bd"/><path d="M4.500 9.500L8 6l3.500 3.500" fill="none" stroke="#fff" stroke-width="2"/></svg></button>
      <svg width="16" height="14"><path d="M1 4h3l4-3.500v13L4 10H1z" fill="#fff" stroke="#1b4b70" stroke-width=".8"/><path d="M10 5q2 2 0 4M12 3q3.500 4 0 8M14 1.500q4 5.500 0 11" fill="none" stroke="#fff"/></svg>
      <div class="clock text-center ms-auto">0:20<br>14.04.2014</div>
      <div class="peek align-self-stretch"></div>
    </div>
  </div>
</footer>
</body>
</html>
